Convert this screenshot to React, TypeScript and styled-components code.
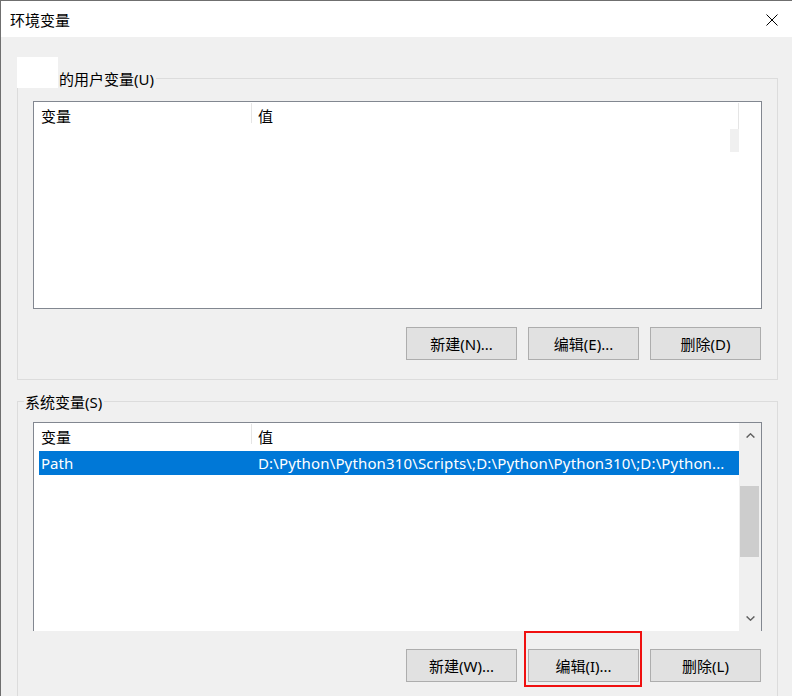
import React from "react";
import styled, { createGlobalStyle } from "styled-components";

const GlobalStyle = createGlobalStyle`
  html, body { margin: 0; padding: 0; background: #f0f0f0; }
  body {
    font-family: "Noto Sans", "Noto Sans CJK SC", sans-serif;
    font-size: 15px;
    color: #000;
  }
  * { box-sizing: border-box; }
`;

const Window = styled.div`
  width: 792px;
  height: 696px;
  overflow: hidden;
  border-top: 1px solid #6f6f6f;
  border-left: 1px solid #6f6f6f;
  background: #f0f0f0;
  display: flex;
  flex-direction: column;
`;

const TitleBar = styled.div`
  height: 36px;
  flex: none;
  background: #ffffff;
  display: flex;
  align-items: center;
  justify-content: space-between;
  padding: 0 14px 0 9px;
`;

const Title = styled.span`
  font-size: 15px;
  line-height: 20px;
  margin-top: 1px;
`;

const CloseIcon = styled.svg`
  width: 12px;
  height: 12px;
  margin-top: 1px;
`;

const Body = styled.div`
  flex: 1;
  display: flex;
  flex-direction: column;
  padding: 41px 14px 0 16px;
`;

const Group = styled.div<{ $open?: boolean }>`
  position: relative;
  border: 1px solid #dcdcdc;
  border-bottom: ${(p) => (p.$open ? "none" : "1px solid #dcdcdc")};
  padding: ${(p) => (p.$open ? "20px 15px 0 15px" : "22px 15px 19px 15px")};
  margin-top: ${(p) => (p.$open ? "21px" : "0")};
  flex: ${(p) => (p.$open ? "1" : "none")};
`;

const Legend = styled.div<{ $left: number; $top: number }>`
  position: absolute;
  left: ${(p) => p.$left}px;
  top: ${(p) => p.$top}px;
  display: flex;
  align-items: flex-start;
`;

const Redacted = styled.div`
  width: 41px;
  height: 31px;
  background: #ffffff;
`;

const LegendText = styled.span<{ $offset: number }>`
  display: block;
  margin-top: ${(p) => p.$offset}px;
  padding: 0 2px 0 1px;
  background: #f0f0f0;
  font-size: 15px;
  line-height: 20px;
  white-space: nowrap;
`;

const ListBox = styled.div<{ $clipped?: boolean }>`
  position: relative;
  width: 729px;
  height: ${(p) => (p.$clipped ? "209px" : "208px")};
  background: #ffffff;
  border: 1px solid #828790;
  border-bottom: ${(p) => (p.$clipped ? "none" : "1px solid #828790")};
  display: flex;
  overflow: hidden;
`;

const ListContent = styled.div`
  flex: 1;
  display: flex;
  flex-direction: column;
  min-width: 0;
`;

const Header = styled.div`
  height: 28px;
  display: flex;
  flex: none;
`;

const HeaderCell = styled.div<{ $width?: number; $pad: number }>`
  width: ${(p) => (p.$width ? `${p.$width}px` : "auto")};
  flex: ${(p) => (p.$width ? "none" : "1")};
  padding-left: ${(p) => p.$pad}px;
  font-size: 15px;
  line-height: 28px;
  white-space: nowrap;
`;

const Divider = styled.div<{ $h: number }>`
  width: 1px;
  flex: none;
  height: ${(p) => p.$h}px;
  margin-top: 1px;
  background: #e5e5e5;
`;

const Row = styled.div<{ $selected?: boolean }>`
  height: 24px;
  margin-left: 5px;
  display: flex;
  background: ${(p) => (p.$selected ? "#0078d7" : "transparent")};
  color: ${(p) => (p.$selected ? "#ffffff" : "#000")};
`;

const Cell = styled.div<{ $width?: number; $pad: number; $spacing?: number }>`
  width: ${(p) => (p.$width ? `${p.$width}px` : "auto")};
  flex: ${(p) => (p.$width ? "none" : "1")};
  min-width: 0;
  padding-left: ${(p) => p.$pad}px;
  font-size: 15px;
  line-height: 24px;
  letter-spacing: ${(p) => p.$spacing ?? 0}px;
  white-space: nowrap;
`;

const Ghost = styled.div`
  position: absolute;
  left: 696px;
  top: 27px;
  width: 9px;
  height: 23px;
  background: #f0f0f0;
`;

const ScrollBar = styled.div`
  width: 22px;
  flex: none;
  background: #f0f0f0;
  display: flex;
  flex-direction: column;
`;

const ArrowButton = styled.div`
  height: 25px;
  flex: none;
  display: flex;
  align-items: center;
  justify-content: center;
`;

const Track = styled.div`
  flex: 1;
`;

const Thumb = styled.div`
  width: 19px;
  height: 71px;
  margin: 38px 0 0 1px;
  background: #cdcdcd;
`;

const Chevron = styled.svg`
  width: 9px;
  height: 5px;
`;

const ButtonRow = styled.div`
  display: flex;
  justify-content: flex-end;
  gap: 11px;
  padding-right: 1px;
  margin-top: 18px;
`;

const Button = styled.button`
  width: 111px;
  height: 33px;
  background: #e1e1e1;
  border: 1px solid #adadad;
  border-radius: 0;
  padding: 0;
  font-family: "Noto Sans", "Noto Sans CJK SC", sans-serif;
  font-size: 15px;
  line-height: 20px;
  color: #000;
`;

const Highlight = styled.div`
  position: relative;
  display: flex;
`;

const HighlightFrame = styled.div`
  position: absolute;
  left: -4px;
  top: -18px;
  width: 118px;
  height: 56px;
  border: 2px solid #f01010;
  pointer-events: none;
`;

const ChevronUp = () => (
  <Chevron viewBox="0 0 9 5">
    <path d="M0.6 4.6 L4.5 0.8 L8.4 4.6" fill="none" stroke="#606060" strokeWidth="1.4" />
  </Chevron>
);

const ChevronDown = () => (
  <Chevron viewBox="0 0 9 5">
    <path d="M0.6 0.4 L4.5 4.2 L8.4 0.4" fill="none" stroke="#606060" strokeWidth="1.4" />
  </Chevron>
);

export default function App() {
  return (
    <>
      <GlobalStyle />
      <Window>
        <TitleBar>
          <Title>环境变量</Title>
          <CloseIcon viewBox="0 0 12 12">
            <path d="M0.5 0.5 L11.5 11.5 M11.5 0.5 L0.5 11.5" stroke="#000" strokeWidth="1" fill="none" />
          </CloseIcon>
        </TitleBar>
        <Body>
          <Group>
            <Legend $left={-1} $top={-22}>
              <Redacted />
              <LegendText $offset={12}>的用户变量(U)</LegendText>
            </Legend>
            <ListBox>
              <ListContent>
                <Header>
                  <HeaderCell $width={217} $pad={7}>变量</HeaderCell>
                  <Divider $h={20} />
                  <HeaderCell $width={486} $pad={6}>值</HeaderCell>
                  <Divider $h={26} />
                </Header>
              </ListContent>
              <Ghost />
            </ListBox>
            <ButtonRow>
              <Button>新建(N)...</Button>
              <Button>编辑(E)...</Button>
              <Button>删除(D)</Button>
            </ButtonRow>
          </Group>
          <Group $open>
            <Legend $left={6} $top={-10}>
              <LegendText $offset={0}>系统变量(S)</LegendText>
            </Legend>
            <ListBox $clipped>
              <ListContent>
                <Header>
                  <HeaderCell $width={217} $pad={7}>变量</HeaderCell>
                  <Divider $h={20} />
                  <HeaderCell $pad={6}>值</HeaderCell>
                </Header>
                <Row $selected>
                  <Cell $width={213} $pad={2}>Path</Cell>
                  <Cell $pad={6} $spacing={0.15}>
                    D:\Python\Python310\Scripts\;D:\Python\Python310\;D:\Python...
                  </Cell>
                </Row>
              </ListContent>
              <ScrollBar>
                <ArrowButton>
                  <ChevronUp />
                </ArrowButton>
                <Track>
                  <Thumb />
                </Track>
                <ArrowButton>
                  <ChevronDown />
                </ArrowButton>
              </ScrollBar>
            </ListBox>
            <ButtonRow>
              <Button>新建(W)...</Button>
              <Highlight>
                <Button>编辑(I)...</Button>
                <HighlightFrame />
              </Highlight>
              <Button>删除(L)</Button>
            </ButtonRow>
          </Group>
        </Body>
      </Window>
    </>
  );
}
